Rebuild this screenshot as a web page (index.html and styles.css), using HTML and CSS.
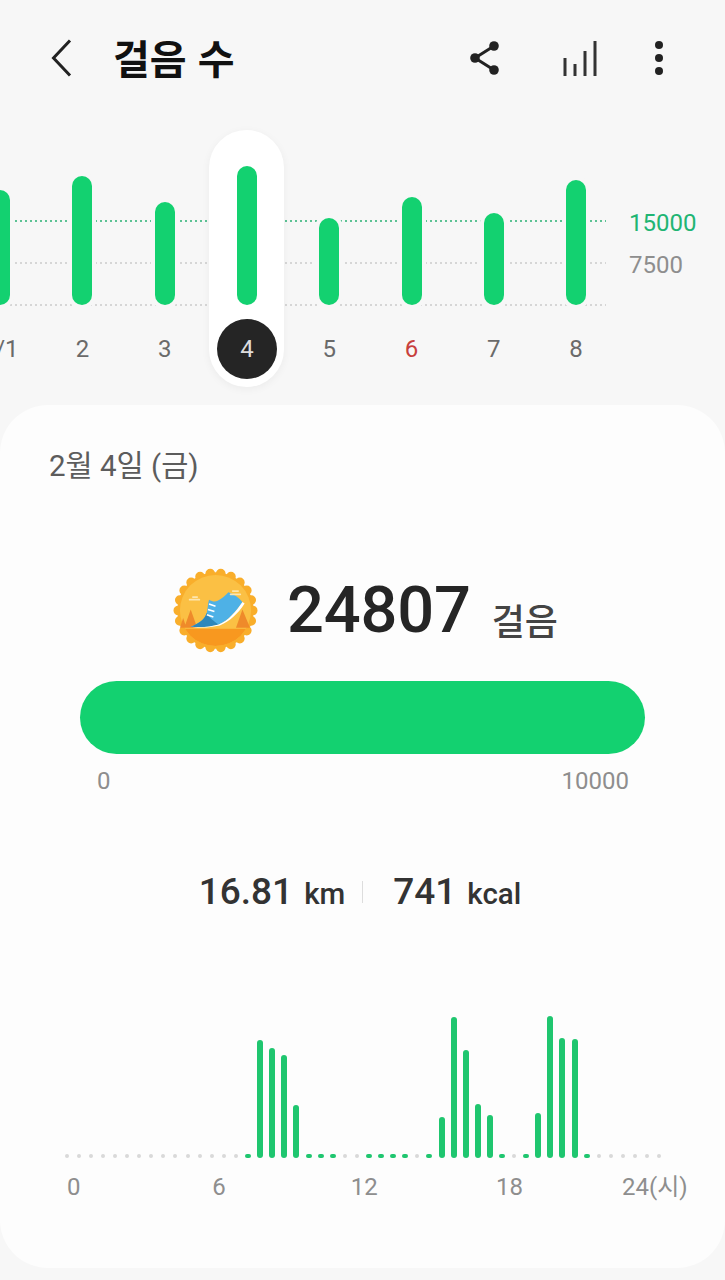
FILE: index.html
```html
<!DOCTYPE html>
<html lang="ko">
<head>
  <meta charset="UTF-8" />
  <meta name="viewport" content="width=device-width, initial-scale=1.0"/>
  <title>걸음 수</title>
  <link rel="stylesheet" href="styles.css">
</head>
<body>
  <header class="topbar">
    <svg class="back" width="24" height="40" viewBox="0 0 24 40"><path d="M20 2.5 3.5 20 20 37.5"/></svg>
    <h1>걸음 수</h1>
    <svg class="share" width="32" height="36" viewBox="0 0 32 36">
      <path d="M25 6 6 18l19 12"/>
      <circle cx="25" cy="6" r="4.8"/><circle cx="6" cy="18" r="4.8"/><circle cx="25" cy="30" r="4.8"/>
    </svg>
    <svg class="stats-icon" width="36" height="37" viewBox="0 0 36 37"><path d="M3 18v18M13 24v12M23 11v25M33 1v35"/></svg>
    <svg class="more" width="10" height="36" viewBox="0 0 10 36">
      <circle cx="5" cy="5" r="4"/><circle cx="5" cy="18" r="4"/><circle cx="5" cy="31" r="4"/>
    </svg>
  </header>

  <section class="week">
    <div class="gl gl-goal"><span class="dots"></span><span class="gl-label">15000</span></div>
    <div class="gl gl-mid"><span class="dots"></span><span class="gl-label">7500</span></div>
    <div class="gl gl-base"><span class="dots"></span></div>

    <div class="days">
      <div class="day"><div class="plot"><div class="bar" style="height:115px"></div></div><div class="num">2/1</div></div>
      <div class="day"><div class="plot"><div class="bar" style="height:129px"></div></div><div class="num">2</div></div>
      <div class="day"><div class="plot"><div class="bar" style="height:103px"></div></div><div class="num">3</div></div>
      <div class="day selected"><div class="plot"><div class="bar" style="height:139px"></div></div><div class="num">4</div></div>
      <div class="day"><div class="plot"><div class="bar" style="height:87px"></div></div><div class="num">5</div></div>
      <div class="day"><div class="plot"><div class="bar" style="height:108px"></div></div><div class="num sunday">6</div></div>
      <div class="day"><div class="plot"><div class="bar" style="height:92px"></div></div><div class="num">7</div></div>
      <div class="day"><div class="plot"><div class="bar" style="height:125px"></div></div><div class="num">8</div></div>
    </div>
  </section>

  <main class="card">
    <div class="date">2월 4일 (금)</div>

    <div class="total">
      <svg class="badge" width="97" height="97" viewBox="0 0 90 90">
        <defs><clipPath id="inner"><circle cx="45" cy="45" r="33"/></clipPath></defs>
        <circle cx="45" cy="45" r="35.500" fill="#f9ae2b"/>
        <circle cx="45" cy="45" r="34.500" fill="none" stroke="#f9ae2b" stroke-width="9" stroke-linecap="round" stroke-dasharray="0 1" pathLength="22"/>
        <circle cx="45" cy="45" r="33" fill="#fbc044"/>
        <rect x="3" y="62" width="84" height="28" fill="#f8981f" clip-path="url(#inner)"/>
        <path d="M22 44 16 61h12zM15 52l-3 9h6zM70 44l-6 17h13z" fill="#ef8a2a"/>
        <path d="M22 60C30 57 35 53 37 47 38 42 38 38 39 35 42 37 45 37 47 36 51 34 54 31 57 28 62 30 67 33 70 37 64 46 57 54 48 58 40 60 30 61 22 60z" fill="#4eb1e6"/>
        <path d="M22 60C30 57 35 53 37 47 39 52 44 55 48 58 40 60 30 61 22 60z" fill="#2e87bb"/>
        <path d="M70 37 72 38.500C66 48 58 55 49 59 40 61 30 61.500 22 60 32 61 41 60 48 58 57 54 64 46 70 37z" fill="#fff"/>
        <path d="M39 39 45 41M38 44 44 46M37 49 43 51" stroke="#fff" stroke-width="1.500" fill="none"/>
        <path d="M21 35h9M24 32.500h4M61 27h5M59 30h9" stroke="#fde6b0" stroke-width="1.600" stroke-linecap="round" fill="none"/>
      </svg>
      <span class="count">24807</span>
      <span class="unit">걸음</span>
    </div>

    <div class="progress"></div>
    <div class="progress-scale"><span>0</span><span>10000</span></div>

    <div class="summary">
      <b>16.81</b><span>km</span><i class="sep"></i><b>741</b><span>kcal</span>
    </div>

    <div class="hours">
      <i></i><i></i><i></i><i></i><i></i><i></i><i></i><i></i><i></i><i></i>
      <i></i><i></i><i></i><i></i><i></i>
      <i class="on"></i>
      <i class="on" style="height:118px"></i>
      <i class="on" style="height:110px"></i>
      <i class="on" style="height:103px"></i>
      <i class="on" style="height:53px"></i>
      <i class="on"></i><i class="on"></i><i class="on"></i>
      <i></i><i></i>
      <i class="on"></i><i class="on"></i><i class="on"></i><i class="on"></i>
      <i></i>
      <i class="on"></i>
      <i class="on" style="height:41px"></i>
      <i class="on" style="height:141px"></i>
      <i class="on" style="height:108px"></i>
      <i class="on" style="height:54px"></i>
      <i class="on" style="height:43px"></i>
      <i class="on"></i>
      <i></i>
      <i class="on"></i>
      <i class="on" style="height:45px"></i>
      <i class="on" style="height:142px"></i>
      <i class="on" style="height:120px"></i>
      <i class="on" style="height:119px"></i>
      <i class="on"></i>
      <i></i><i></i><i></i><i></i><i></i><i></i>
    </div>
    <div class="hour-labels"><span>0</span><span>6</span><span>12</span><span>18</span><span>24(시)</span></div>
  </main>
</body>
</html>
```

FILE: styles.css
```css
* {
  box-sizing: border-box;
}
html, body {
  margin: 0;
  padding: 0;
}
body {
  width: 725px;
  height: 1280px;
  overflow: hidden;
  background-color: #f7f7f7;
  color: #252525;
  font-family: Roboto, "Noto Sans CJK KR", sans-serif;
}

/* top bar */
.topbar {
  display: flex;
  align-items: center;
  height: 76px;
  margin-top: 20px;
  padding-left: 50px;
}
.topbar h1 {
  margin: 0 0 2px 39px;
  font-size: 40px;
  font-weight: 700;
  line-height: 74px;
  color: #111;
  font-family: "Noto Sans CJK KR", sans-serif;
}
.back path {
  fill: none;
  stroke: #222;
  stroke-width: 3;
}
.share {
  margin-left: 234px;
}
.share path {
  fill: none;
  stroke: #222;
  stroke-width: 3;
}
.share circle, .more circle {
  fill: #222;
}
.stats-icon {
  margin-left: 61px;
}
.stats-icon path {
  fill: none;
  stroke: #333;
  stroke-width: 3;
}
.more {
  margin-left: 56px;
}

/* week chart */
.week {
  position: relative;
  height: 257px;
  margin-top: 34px;
}
.gl {
  position: absolute;
  left: 0;
  right: 0;
  height: 30px;
  display: flex;
  align-items: center;
}
.gl-goal { top: 76px; }
.gl-mid { top: 118px; }
.gl-base { top: 160px; }
.dots {
  width: 606px;
  height: 2px;
  background: repeating-linear-gradient(90deg, #d6d6d6 0 2px, transparent 2px 5px);
}
.gl-goal .dots {
  background: repeating-linear-gradient(90deg, #5cc294 0 2px, transparent 2px 5px);
}
.gl-label {
  margin-left: 23px;
  padding-top: 3px;
  font-size: 24px;
  color: #8e8e8e;
}
.gl-goal .gl-label {
  color: #21b573;
}
.days {
  position: relative;
  display: flex;
  margin-left: -41px;
  height: 257px;
}
.day {
  flex: none;
  width: 75px;
  margin: 0 3.65px;
  display: flex;
  flex-direction: column;
  align-items: center;
  border-radius: 38px;
}
.day.selected {
  background: #fff;
  box-shadow: 0 2px 8px rgba(0,0,0,0.05);
}
.plot {
  height: 175px;
  display: flex;
  align-items: flex-end;
}
.bar {
  width: 20px;
  border-radius: 10px;
  background: #13d170;
  box-shadow: 0 0 0 4px #f7f7f7;
}
.selected .bar {
  box-shadow: none;
}
.num {
  width: 60px;
  height: 60px;
  margin-top: 14px;
  display: flex;
  align-items: center;
  justify-content: center;
  font-size: 24px;
  color: #6a6a6a;
}
.num.sunday {
  color: #c8403c;
}
.selected .num {
  border-radius: 50%;
  background: #252525;
  color: #ddd;
}

/* card */
.card {
  height: 863px;
  margin-top: 18px;
  padding-top: 40px;
  background: #fdfdfd;
  border-radius: 48px;
}
.date {
  padding-left: 49px;
  font-size: 29.5px;
  line-height: 42px;
  color: #5c5c5c;
}
.total {
  display: flex;
  align-items: center;
  height: 90px;
  margin-top: 78px;
  padding-left: 166.5px;
}
.badge {
  flex: none;
  margin: -4px 0;
}
.count {
  margin-left: 23.5px;
  font-size: 65px;
  font-weight: 500;
  letter-spacing: -0.2px;
}
.unit {
  margin: 18px 0 0 21px;
  font-size: 36px;
  font-weight: 500;
  color: #444;
  font-family: "Noto Sans CJK KR", sans-serif;
}
.progress {
  height: 73px;
  margin: 26px 80px 0;
  border-radius: 37px;
  background: #13d170;
}
.progress-scale {
  display: flex;
  justify-content: space-between;
  margin-top: 11px;
  padding: 0 96px 0 97px;
  font-size: 24px;
  line-height: 32px;
  color: #8e8e8e;
}
.summary {
  display: flex;
  align-items: baseline;
  justify-content: center;
  height: 44px;
  margin: 73px 0 0 -5px;
  line-height: 44px;
  color: #333;
}
.summary b {
  font-size: 37px;
  font-weight: 500;
}
.summary span {
  margin-left: 11px;
  font-size: 29.5px;
  font-weight: 500;
}
.sep {
  align-self: center;
  width: 1px;
  height: 22px;
  margin: 0 30px 0 17px;
  background: #ddd;
}
.hours {
  display: grid;
  grid-template-columns: repeat(50, 12.1px);
  justify-items: center;
  align-items: end;
  height: 148px;
  margin: 96px 0 0 60.6px;
}
.hours i {
  width: 4px;
  height: 4px;
  border-radius: 2px;
  background: #d9d9d9;
}
.hours .on {
  width: 6px;
  background: #1fc66f;
  border-radius: 3px;
}
.hour-labels {
  display: grid;
  grid-template-columns: repeat(5, 145.3px);
  justify-items: center;
  margin: 13px 0 0 1px;
  font-size: 24px;
  line-height: 32px;
  color: #8e8e8e;
}
```
